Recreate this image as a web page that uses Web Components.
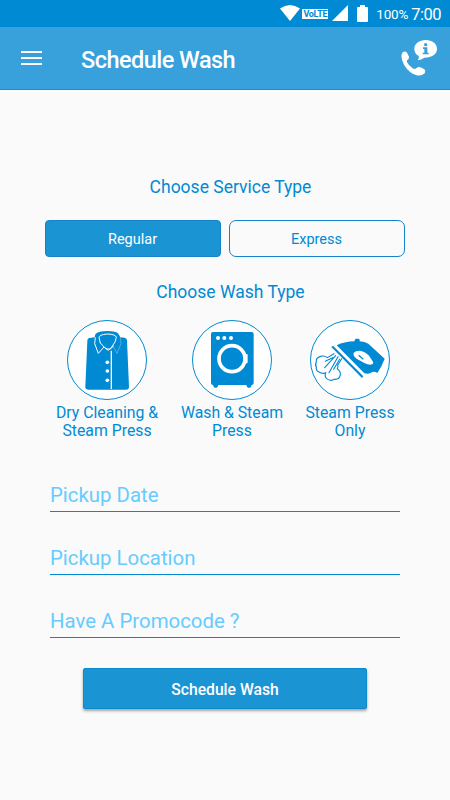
<!DOCTYPE html>
<html lang="en">
<head>
<meta charset="UTF-8">
<meta name="viewport" content="width=device-width, initial-scale=1">
<title>Schedule Wash</title>
<style>
    :root {
        --blue: #008ad4;
        --bar: #38a1db;
        --fill: #1b94d4;
        --hint: #66ccff;
        --page: #fafafa;
    }

    body {
        margin: 0;
        background: var(--page);
        font-family: Roboto, sans-serif;
        color: var(--blue);
    }
</style>
</head>
<body>
<wash-screen>
    <status-bar slot="status" battery="100%" time="7:00"></status-bar>
    <app-bar slot="bar">Schedule Wash</app-bar>

    <section-title>Choose Service Type</section-title>
    <service-toggle>
        <service-option selected>Regular</service-option>
        <service-option>Express</service-option>
    </service-toggle>

    <section-title class="wash">Choose Wash Type</section-title>
    <wash-types>
        <wash-type icon="shirt">Dry Cleaning &amp;<br>Steam Press</wash-type>
        <wash-type icon="washer">Wash &amp; Steam<br>Press</wash-type>
        <wash-type icon="iron">Steam Press<br>Only</wash-type>
    </wash-types>

    <form-field slot="form">Pickup Date</form-field>
    <form-field slot="form">Pickup Location</form-field>
    <form-field slot="form">Have A Promocode ?</form-field>
    <submit-button slot="form">Schedule Wash</submit-button>
</wash-screen>

<script>
const icons = {
    shirt: `
        <svg viewBox="21 15 240 240">
            <path fill="currentColor" d="M84 71Q86 68 94 68L104 67L106 58Q114 48 142 48Q170 48 175 56L181 67L193 68Q200 69 201 76L207 215Q207 224 198 224H85Q75 224 76 214L82 78Q82 74 84 71Z"/>
            <g fill="none" stroke="#fff" stroke-width="3">
                <path d="M106 67L104 86L115 115L132 96L145 106L161 93"/>
                <path d="M117 68Q117 59 142 57Q168 58 169 67L165 81L151 102H138L121 84Z"/>
                <path stroke-width="1.2" opacity=".75" d="M181 67L183 86L171 115L160 94"/>
                <path stroke-width="4" d="M154 107V222"/>
            </g>
            <g fill="#fff"><circle cx="142" cy="142" r="5.5"/><circle cx="142" cy="168" r="5.5"/><circle cx="142" cy="196" r="5.5"/></g>
        </svg>`,
    washer: `
        <svg viewBox="21 15 240 240">
            <path fill="currentColor" d="M84 51H200Q206 51 206 57V204Q206 210 200 210L198 215Q192 222 186 215L184 210H100L98 215Q92 222 86 215L84 210Q78 210 78 204V57Q78 51 84 51Z"/>
            <g fill="#fff"><circle cx="99" cy="69" r="6"/><circle cx="118" cy="69" r="6"/><circle cx="138" cy="69" r="6"/><rect x="178" y="117" width="10" height="28" rx="3"/></g>
            <circle cx="141" cy="131" r="39" fill="none" stroke="#fff" stroke-width="11"/>
        </svg>`,
    iron: `
        <svg viewBox="15 15 240 240">
            <path fill="currentColor" d="M79 96L84 92L175 184L171 189Z"/>
            <path fill="currentColor" d="M95 91Q117 80 149 79V74L153 71H161L164 74V79Q180 80 190 86L239 131Q232 151 217 174Q206 166 197 174L188 176L178 175Z"/>
            <path fill="#fff" d="M146 113Q154 106 169 108Q180 110 191 121L202 137Q208 145 201 148Q193 151 178 144L156 132Q143 123 146 113Z"/>
            <path fill="none" stroke="currentColor" stroke-width="4" d="M161 121L175 133"/>
            <g fill="none" stroke="currentColor" stroke-width="3.4" stroke-linecap="round">
                <path d="M87 116L67 128Q59 121 47 124Q32 128 34 141Q29 148 34 157Q32 166 42 171Q53 178 62 173Q58 185 65 191Q76 200 88 193Q104 194 106 179Q107 168 97 162Q100 155 98 151L110 131"/>
                <path d="M92 122L59 158M99 125L72 173M83 128L61 139M104 133L86 163"/>
            </g>
        </svg>`
};

class WashScreen extends HTMLElement {
    constructor() {
        super();
        this.attachShadow({ mode: 'open' }).innerHTML = `
            <style>
                :host {
                    display: flex;
                    flex-direction: column;
                    height: 800px;
                    overflow: hidden;
                }
                main {
                    padding: 86px 45px 0;
                }
                form {
                    display: flex;
                    flex-direction: column;
                    margin: 0;
                    padding: 35px 50px 0;
                }
            </style>
            <slot name="status"></slot>
            <slot name="bar"></slot>
            <main><slot></slot></main>
            <form><slot name="form"></slot></form>
        `;
    }
}

class StatusBar extends HTMLElement {
    connectedCallback() {
        this.attachShadow({ mode: 'open' }).innerHTML = `
            <style>
                :host {
                    display: flex;
                    align-items: center;
                    justify-content: flex-end;
                    box-sizing: border-box;
                    height: 27px;
                    padding-right: 9px;
                    background: var(--blue);
                    color: #fff;
                }
                svg { display: block; margin-bottom: 1px; fill: #fff; }
                .volte {
                    box-sizing: border-box;
                    width: 26px;
                    height: 10px;
                    margin: 0 4px 0 2px;
                    background: #fff;
                    color: var(--blue);
                    font: 700 9px/10px Roboto, sans-serif;
                    letter-spacing: -.3px;
                    text-align: center;
                }
                .battery { margin-left: 9px; }
                .percent { margin: 1px 3px 0 8px; font-size: 13.5px; letter-spacing: -.2px; }
                .time { margin-top: 1px; font-size: 16.5px; letter-spacing: -.5px; }
            </style>
            <svg width="20" height="16" viewBox="0 0 20 16"><path d="M0 3.5Q10-3.5 20 3.5L10 16Z"/></svg>
            <span class="volte">VoLTE</span>
            <svg width="16" height="16" viewBox="0 0 16 16"><path d="M16 0V16H0Z"/></svg>
            <svg class="battery" width="11" height="17" viewBox="0 0 11 17"><path d="M3 0H8V2H10Q11 2 11 3V16Q11 17 10 17H1Q0 17 0 16V3Q0 2 1 2H3Z"/></svg>
            <span class="percent">${this.getAttribute('battery')}</span>
            <span class="time">${this.getAttribute('time')}</span>
        `;
    }
}

class AppBar extends HTMLElement {
    constructor() {
        super();
        this.attachShadow({ mode: 'open' }).innerHTML = `
            <style>
                :host {
                    display: flex;
                    align-items: center;
                    box-sizing: border-box;
                    height: 63px;
                    padding: 0 12px 0 21px;
                    background: var(--bar);
                    border-bottom: 1px solid #148fd3;
                    color: #fff;
                }
                svg { display: block; }
                h1 {
                    flex: 1;
                    margin: 3px 0 0 39px;
                    font-size: 23.5px;
                    font-weight: 500;
                    letter-spacing: -.53px;
                    line-height: 28px;
                }
            </style>
            <svg width="21" height="14" viewBox="0 0 21 14" fill="#fff"><path d="M0 0H21V2H0ZM0 6H21V8H0ZM0 12H21V14H0Z"/></svg>
            <h1><slot></slot></h1>
            <svg width="38" height="38" viewBox="390 118 114 114" fill="#fff">
                <path d="M467 121C487 121 501 133 501 147C501 163 486 174 463 174Q454 181 443 182Q449 176 446 169Q433 161 433 147C433 132 448 121 467 121Z"/>
                <path d="M398 158Q405 152 411 159L417 171Q418 180 410 183Q411 192 426 204Q434 211 441 204Q444 200 451 203L462 208Q468 212 464 221Q455 230 440 227Q417 220 402 195Q389 170 398 158Z"/>
                <circle fill="#38a1db" cx="467" cy="135" r="5"/>
                <path fill="#38a1db" d="M459 143H472V159H476V164H458V159H463V148H459Z"/>
            </svg>
        `;
    }
}

class SectionTitle extends HTMLElement {
    constructor() {
        super();
        this.attachShadow({ mode: 'open' }).innerHTML = `
            <style>
                :host {
                    display: block;
                    padding-left: 11px;
                    font-size: 17.5px;
                    line-height: 22px;
                    text-align: center;
                }
                :host(.wash) { margin-top: 24px; }
            </style>
            <slot></slot>
        `;
    }
}

class ServiceToggle extends HTMLElement {
    constructor() {
        super();
        this.attachShadow({ mode: 'open' }).innerHTML = `
            <style>
                :host {
                    display: grid;
                    grid-template-columns: 1fr 1fr;
                    gap: 8px;
                    margin-top: 22px;
                }
            </style>
            <slot></slot>
        `;
    }
}

class ServiceOption extends HTMLElement {
    constructor() {
        super();
        this.attachShadow({ mode: 'open' }).innerHTML = `
            <style>
                :host {
                    display: block;
                    box-sizing: border-box;
                    height: 37px;
                    padding-right: 1px;
                    border: 1px solid #1583cb;
                    border-radius: 7px;
                    font-size: 14.5px;
                    line-height: 37px;
                    text-align: center;
                }
                :host([selected]) {
                    background: var(--fill);
                    border-radius: 4px;
                    color: #fff;
                }
            </style>
            <slot></slot>
        `;
    }
}

class WashTypes extends HTMLElement {
    constructor() {
        super();
        this.attachShadow({ mode: 'open' }).innerHTML = `
            <style>
                :host {
                    display: grid;
                    grid-template-columns: 126px 124px 112px;
                    margin: 17px -1px 0;
                }
            </style>
            <slot></slot>
        `;
    }
}

class WashType extends HTMLElement {
    connectedCallback() {
        this.attachShadow({ mode: 'open' }).innerHTML = `
            <style>
                :host {
                    display: flex;
                    flex-direction: column;
                    align-items: center;
                    font-size: 15.8px;
                    line-height: 18px;
                    text-align: center;
                }
                .ring {
                    box-sizing: border-box;
                    width: 80px;
                    height: 80px;
                    border: 1px solid var(--blue);
                    border-radius: 50%;
                    background: #fff;
                }
                svg { display: block; width: 80px; height: 80px; margin: -1px; }
                .label { margin-top: 4px; }
            </style>
            <div class="ring">${icons[this.getAttribute('icon')]}</div>
            <div class="label"><slot></slot></div>
        `;
    }
}

class FormField extends HTMLElement {
    constructor() {
        super();
        this.attachShadow({ mode: 'open' }).innerHTML = `
            <style>
                :host {
                    display: block;
                    box-sizing: border-box;
                    height: 37px;
                    margin-bottom: 26px;
                    border-bottom: 1px solid var(--blue);
                    color: var(--hint);
                    font-size: 20.4px;
                    line-height: 40px;
                }
            </style>
            <slot></slot>
        `;
    }
}

class SubmitButton extends HTMLElement {
    constructor() {
        super();
        this.attachShadow({ mode: 'open' }).innerHTML = `
            <style>
                :host { display: block; padding: 4px 33px 0; }
                button {
                    display: block;
                    width: 100%;
                    height: 41px;
                    padding: 1px 0 0;
                    border: 1px solid #0b8bcf;
                    border-radius: 2px;
                    background: var(--fill);
                    box-shadow: 0 2px 3px rgba(0, 0, 0, .35);
                    color: #fff;
                    font: 500 15.7px Roboto, sans-serif;
                }
            </style>
            <button type="button"><slot></slot></button>
        `;
    }
}

customElements.define('wash-screen', WashScreen);
customElements.define('status-bar', StatusBar);
customElements.define('app-bar', AppBar);
customElements.define('section-title', SectionTitle);
customElements.define('service-toggle', ServiceToggle);
customElements.define('service-option', ServiceOption);
customElements.define('wash-types', WashTypes);
customElements.define('wash-type', WashType);
customElements.define('form-field', FormField);
customElements.define('submit-button', SubmitButton);
</script>
</body>
</html>
